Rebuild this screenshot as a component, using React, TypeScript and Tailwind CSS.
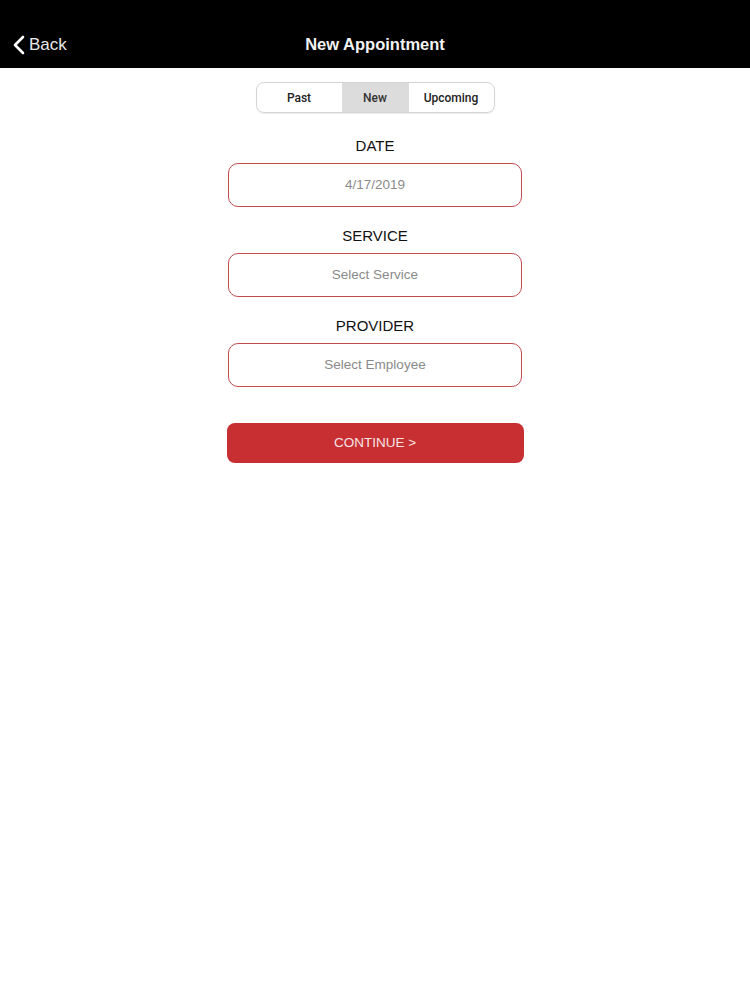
import React from "react";

const font = { fontFamily: '"Liberation Sans", Arial, sans-serif' };

function Field({ label, value }: { label: string; value: string }) {
  return (
    <div className="flex flex-col items-center">
      <div className="text-[15px] leading-[18px] text-[#111] h-[18px] mb-[8px]">{label}</div>
      <div className="w-[294px] h-[44px] rounded-[10px] border-[1.5px] border-[#c24b50] flex items-center justify-center text-[13.5px] text-[#8a8a8a]">
        {value}
      </div>
    </div>
  );
}

export default function App() {
  return (
    <div className="w-[750px] h-[1000px] bg-white" style={font}>
      <div className="h-[68px] bg-black relative flex items-end pb-[14px] justify-center">
        <div className="absolute left-[12px] bottom-[13px] flex items-center">
          <svg width="13" height="20" viewBox="0 0 13 20" className="mr-[4px]">
            <path d="M11 2 L3 10 L11 18" fill="none" stroke="white" strokeWidth="2.6" strokeLinecap="round" strokeLinejoin="round" />
          </svg>
          <span className="text-[17px] leading-[20px] text-[#e8e8e8]">Back</span>
        </div>
        <div className="font-bold text-[16.5px] leading-[20px] text-[#f2f2f2]">New Appointment</div>
      </div>
      <div className="flex flex-col items-center">
        <div
          className="mt-[14px] flex w-[239px] h-[31px] rounded-[8px] border border-[#d4d4d4] overflow-hidden text-[12px] font-medium text-[#222] shadow-[0_1px_1px_rgba(0,0,0,0.08)]"
          style={{ fontFamily: 'Roboto, "Liberation Sans", sans-serif' }}
        >
          <div className="w-[85px] flex items-center justify-center">Past</div>
          <div className="w-[67px] flex items-center justify-center bg-[#dcdcdc] text-[#333]">New</div>
          <div className="flex-1 flex items-center justify-center">Upcoming</div>
        </div>
        <div className="mt-[24px] flex flex-col gap-[20px]">
          <Field label="DATE" value="4/17/2019" />
          <Field label="SERVICE" value="Select Service" />
          <Field label="PROVIDER" value="Select Employee" />
        </div>
        <button className="mt-[36px] w-[297px] h-[40px] rounded-[8px] bg-[#c72f33] text-[#f5e5e5] text-[13.5px] flex items-center justify-center">
          CONTINUE &gt;
        </button>
      </div>
    </div>
  );
}
